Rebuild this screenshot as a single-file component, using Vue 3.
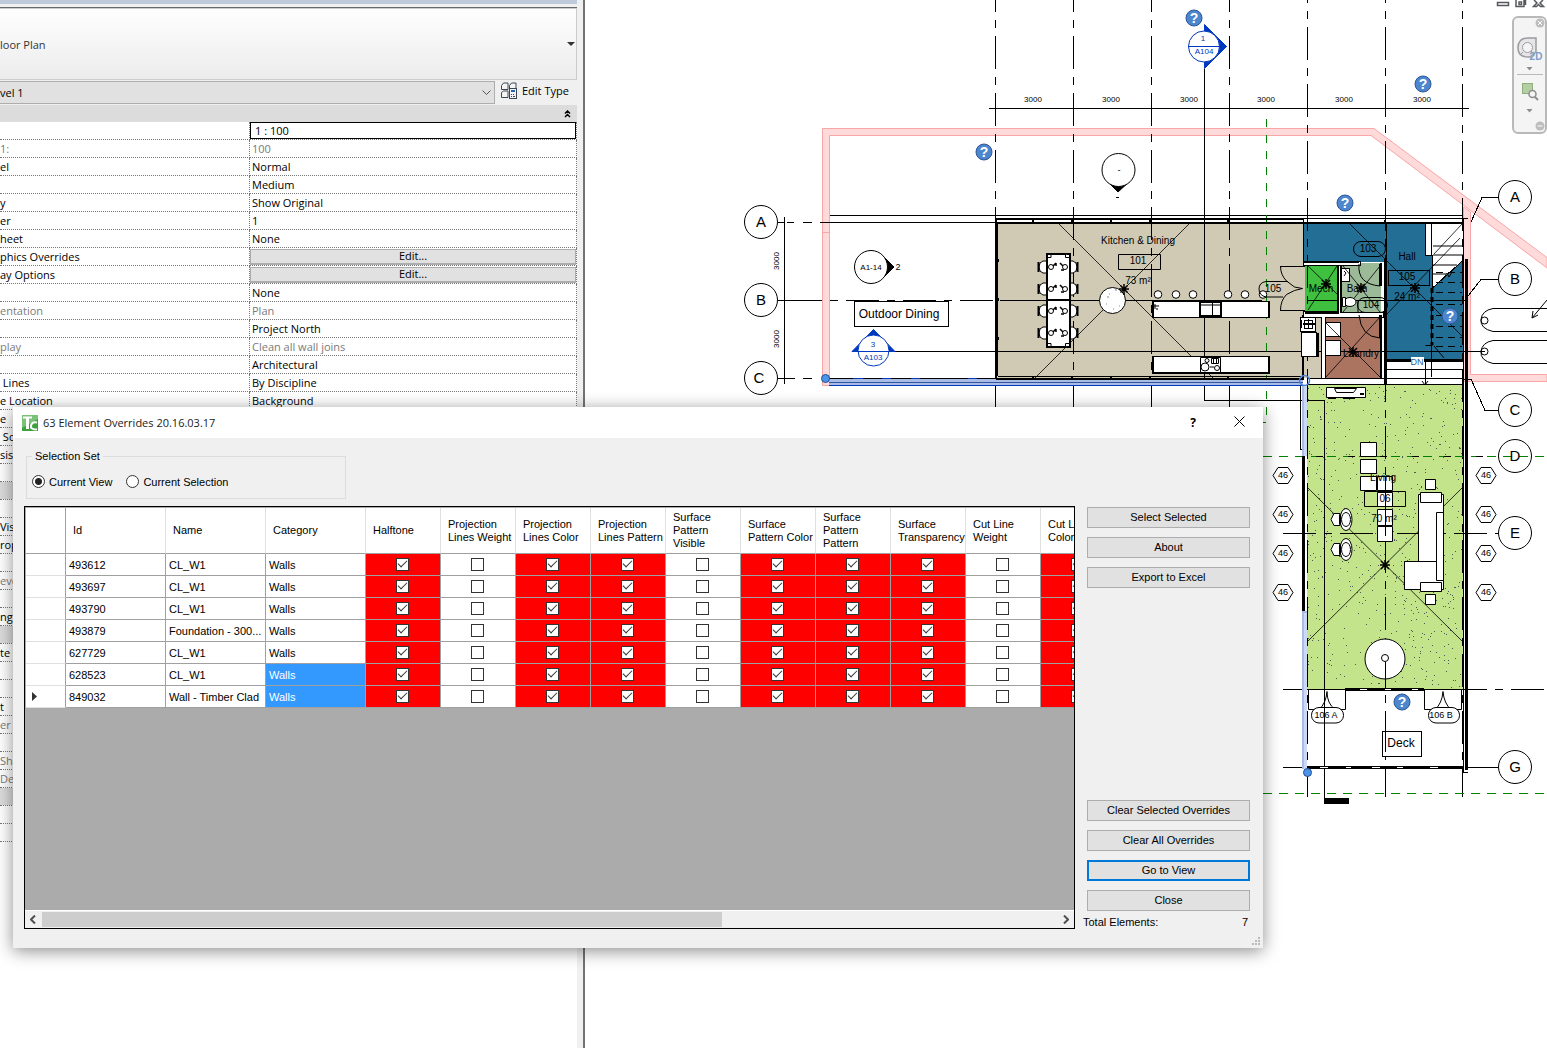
<script setup>
import { ref } from 'vue'

const properties = [
  { name: '', value: '1 : 100', kind: 'input' },
  { name: '1:', value: '100', muted: true },
  { name: 'el', value: 'Normal' },
  { name: '', value: 'Medium' },
  { name: 'y', value: 'Show Original' },
  { name: 'er', value: '1' },
  { name: 'heet', value: 'None' },
  { name: 'phics Overrides', value: 'Edit...', kind: 'button' },
  { name: 'ay Options', value: 'Edit...', kind: 'button' },
  { name: '', value: 'None' },
  { name: 'entation', value: 'Plan', muted: true },
  { name: '', value: 'Project North' },
  { name: 'play', value: 'Clean all wall joins', muted: true },
  { name: '', value: 'Architectural' },
  { name: ' Lines', value: 'By Discipline' },
  { name: 'e Location', value: 'Background' },
  { name: 'e' },
  { name: ' Sc' },
  { name: 'sis' },
  { name: '' },
  { name: '', kind: 'group' },
  { name: '' },
  { name: 'Vis' },
  { name: 'rop' },
  { name: '' },
  { name: 'eve', muted: true },
  { name: '' },
  { name: 'ng' },
  { name: '', kind: 'group' },
  { name: 'te' },
  { name: '' },
  { name: '' },
  { name: 't' },
  { name: 'er', muted: true },
  { name: '' },
  { name: 'She', muted: true },
  { name: 'Det', muted: true },
  { name: '', kind: 'group' },
  { name: '' },
  { name: '' },
]

const flags = [
  { label: 'Halftone', on: true },
  { label: 'Projection\nLines Weight', on: false },
  { label: 'Projection\nLines Color', on: true },
  { label: 'Projection\nLines Pattern', on: true },
  { label: 'Surface\nPattern\nVisible', on: false },
  { label: 'Surface\nPattern Color', on: true },
  { label: 'Surface\nPattern\nPattern', on: true },
  { label: 'Surface\nTransparency', on: true },
  { label: 'Cut Line\nWeight', on: false },
  { label: 'Cut Line\nColor', on: true },
]
const elements = [
  { id: '493612', name: 'CL_W1' },
  { id: '493697', name: 'CL_W1' },
  { id: '493790', name: 'CL_W1' },
  { id: '493879', name: 'Foundation - 300...' },
  { id: '627729', name: 'CL_W1' },
  { id: '628523', name: 'CL_W1', selected: true },
  { id: '849032', name: 'Wall - Timber Clad', selected: true, current: true },
]
const scope = ref('view')

// Plan drawing data
const bays = [1033, 1111, 1189, 1266, 1344, 1422]
const columnGrids = [
  { x: 995.5, from: -21, to: 420 },
  { x: 1073.5, from: -21, to: 420 },
  { x: 1151.5, from: -21, to: 420 },
  { x: 1229.5, from: -21, to: 420 },
  { x: 1307.5, from: -30, to: 797 },
  { x: 1385.5, from: -30, to: 797 },
  { x: 1462.5, from: -30, to: 797 },
]
const bubbles = [
  ['A', 761, 222], ['B', 761, 300], ['C', 759, 378, 761],
  ['A', 1515, 197], ['B', 1515, 279], ['C', 1515, 410],
  ['D', 1515, 456], ['E', 1515, 533], ['G', 1515, 767],
]
const helps = [[1194, 18], [984, 152], [1423, 84], [1345, 203], [1450, 316], [1402, 702]]
const tags = [475, 514, 553, 592].flatMap((y) => [[1283, y], [1486, y]])
const chairs = [267, 289, 311, 333]
const stools = [1158, 1176, 1193, 1228, 1245, 1263]
const treads = [272, 282, 292, 304, 315, 326, 337, 346]

let seed = 7
const rand = () => (seed = (seed * 16807) % 2147483647) / 2147483647
const speckles = Array.from({ length: 620 }, () => {
  const x = 1308 + Math.floor(rand() * 154)
  const y = 387 + Math.floor(rand() * 301)
  return `M${x} ${y}h1v1h-1z`
}).join('')
</script>

<template>
  <div class="app">
    <aside class="palette">
      <div class="caption"></div>
      <div class="palette-body">
        <button class="type-picker" type="button"><span>loor Plan</span><i class="caret"></i></button>
        <div class="instance">
          <select aria-label="View"><option>vel 1</option></select>
          <svg class="chevron" width="9" height="6" viewBox="0 0 9 6"><path d="M.5.5l4 4 4-4" /></svg>
          <button class="edit-type" type="button">
            <svg width="16" height="17" viewBox="0 0 16 17" fill="#f4f4f4" stroke="#3c4658">
              <path d="M.5 3.500l2-2.500h4.500v6.500H.500zM8.500 3.500l2-2.500h4.500v6.500H8.500zM.5 10.500l2-1.500h4.500v6.500H.500z" />
              <rect x="8.500" y="6.500" width="7" height="10" />
              <path d="M10 9h4" stroke="#2468b0" stroke-width="2" />
              <path d="M10 12.500h1m1 0h1m-3 2h1m1 0h2" />
            </svg>
            <span>Edit Type</span>
          </button>
        </div>
        <div class="section">
          <svg width="7" height="8" viewBox="0 0 7 8"><path d="M1 3.500L3.500 1 6 3.500M1 7l2.500-2.500L6 7" fill="none" stroke="#000" stroke-width="1.500" /></svg>
        </div>
        <table class="props">
          <tbody>
            <tr v-for="(p, i) in properties" :key="i" :class="{ muted: p.muted, group: p.kind === 'group' }">
              <td class="prop-name">{{ p.name }}</td>
              <td class="prop-value" :class="{ control: p.kind === 'input' || p.kind === 'button' }">
                <input v-if="p.kind === 'input'" type="text" :value="p.value" aria-label="View scale" />
                <button v-else-if="p.kind === 'button'" type="button">{{ p.value }}</button>
                <template v-else>{{ p.value }}</template>
              </td>
            </tr>
          </tbody>
        </table>
      </div>
    </aside>

    <main class="canvas">
      <svg class="plan" viewBox="585 0 962 1048" preserveAspectRatio="xMinYMin slice">
        <!-- site boundary -->
        <g fill="#ffdada" stroke="#f9a6a6">
          <path d="M822.500 385.500V128.500H1374L1547 257.500V268L1371 135.500H829.500V385.500z" />
          <path d="M822 232.500h8" />
          <path d="M1463.500 207L1470.500 212V374.500H1547V381.500H1463.500z" />
        </g>

        <!-- room fills -->
        <g class="crisp">
          <path fill="#d0cab5" d="M997 223H1303V266H1305V313H1321V378H997z" />
          <path fill="#236e94" d="M1303 223H1463V359H1385V262H1303z" />
          <rect x="1305" y="265" width="33" height="48" fill="#3fc03f" />
          <rect x="1341" y="263" width="40" height="51" fill="#9dba98" />
          <rect x="1325" y="317" width="57" height="61" fill="#aa7460" />
          <rect x="1307" y="385" width="156" height="304" fill="#c4e48c" />
          <path :d="speckles" fill="#4c5a5c" />
          <path fill="#fff" stroke="#000" d="M1425.500 222.500H1463.500V260L1432.500 288V255.500H1425.500z" />
          <path d="M1431.500 223V255" stroke="#000" />
          <rect x="1386" y="361" width="77" height="24" fill="#fff" />
        </g>

        <!-- grid lines -->
        <g stroke="#000" class="crisp">
          <line v-for="g in columnGrids" :key="g.x" :x1="g.x" :x2="g.x" :y1="g.from" :y2="g.to" stroke-dasharray="33 8 8 8" />
          <path d="M778 222.500H784M787 222.500h7M803 222.500h9M820 222.500H995M830 215.500H1463M778 300.500h12" fill="none" />
          <path d="M789 300.500H1000" stroke-dasharray="33 8 8 8" />
          <path d="M1000 300.500H1262M1307 300.500H1468M778 378.500h17M803 378.500h9" />
          <path d="M895 351.500H1485M989 108.500H1469M784.500 217V384" />
          <path d="M1204.500 69V400.500H1324.500V798" fill="none" />
          <path d="M1283 533.500H1498M1283 689.500H1547" stroke-dasharray="33 8 8 8" />
          <path d="M1283 767.500H1307M1468 767.500H1498" />
          <path d="M1471 222L1482 197.500H1498M1468 296L1481 279.500H1498M1463 379H1471L1485 410.500H1498" fill="none" />
          <rect x="1324" y="798" width="25" height="6" fill="#000" stroke="none" />
        </g>
        <g stroke="#008000" stroke-dasharray="8 8" class="crisp" fill="none">
          <path d="M1266.500 119V422.500H1260" />
          <path d="M1263 456.500H1547M1263 793.500H1547" stroke-dasharray="9 7" />
        </g>
        <path class="crisp" d="M1307 456.500H1498" stroke="#000" stroke-dasharray="7 25" stroke-dashoffset="-9" />

        <!-- kitchen walls -->
        <g fill="none" stroke="#000" class="crisp">
          <path d="M996 380V219H1303" stroke-width="2" />
          <path d="M997.500 376V222H1303M998 376.500H1303M1303 218.500H1468" />
          <path d="M998 223H1303M996 379H1303M1303 223H1463" stroke-width="2" />
          <path d="M1032 221h2M1071 221h2M1110 221h2M1149 221h2M1227 221h2M1384 221h2M1032 377h2M1071 377h2M1110 377h2M1149 377h2M1227 377h2M996 260h3M996 299h3M996 338h3" stroke-width="3" />
        </g>

        <!-- kitchen contents -->
        <g fill="none" stroke="#000">
          <path d="M1058 223L1213 378M1190 223L1035 378" stroke-width=".8" />
          <g fill="#fff">
            <g v-for="y in chairs" :key="y">
              <path :d="`M1047 ${y - 6}h-4q-4 1-4 6t4 6h4M1069 ${y - 6}h4q4 1 4 6t-4 6h-4`" />
              <path :d="`M1038.500 ${y - 5}v10M1077.500 ${y - 5}v10`" stroke-width="2" />
            </g>
            <rect x="1047" y="254" width="23" height="93" stroke-width="2" />
            <path d="M1046 300H1071" stroke-width="2" />
            <path d="M1048 257.500h3v-3M1065.500 254v3.500h4M1048 343.500h3v3M1065.500 347v-3.500h4" />
            <g v-for="y in chairs" :key="`p${y}`">
              <circle cx="1051" :cy="y" r="2.500" /><circle cx="1065" :cy="y" r="2.500" />
              <path :d="`M1053 ${y - 1}l3-3M1063 ${y - 1}l-3-3M1056 ${y - 4}v3M1061 ${y + 3}h3`" stroke-width="1.500" />
            </g>
            <circle cx="1112.500" cy="300.500" r="13" />
            <path d="M1107 297h2m6-7h2m-11 14h1m12 2h1m-7 3h1m-5-15h1" stroke="#888" />
            <circle v-for="x in stools" :key="x" :cx="x" cy="294.500" r="3.800" />
            <path d="M1152.500 301.500H1268.500V317.500H1152.500zM1152.500 356.500H1268.500V373H1152.500z" />
            <path d="M1153 301V318M1269 301V318M1153 356V373H1269V356" fill="none" stroke-width="2" />
            <path d="M1200 302H1221V316H1200z" stroke-width="2" />
            <path d="M1200 305h21M1212.500 303v13M1154 306h5M1155 304v5M1157 308v2" />
            <path d="M1200.500 357.500H1220.500V372.500H1200.500z" />
            <circle cx="1207" cy="360.500" r="2" /><circle cx="1205" cy="367" r="4" /><circle cx="1217" cy="368" r="2.500" />
            <path d="M1211.500 358.500h7v5h-7zM1213.500 358v5M1216.500 358v5M1210 367h4" />
          </g>
          <path d="M1118.500 254.500H1160.500V269.500H1118.500z" />
          <path d="M1119 289h10M1124 284v11M1120.500 285.500l7 7M1127.500 285.500l-7 7" stroke-width="1.500" />
          <path d="M1288 281.500H1266q-7 1-7 7.500t7 8H1283" />
          <path d="M1280 266.500H1305M1280 310.500H1305M1280.500 266q0 9 6 15l8 6 8 1.500-8 2-8 4q-6 6-6 16" />
        </g>

        <!-- service rooms -->
        <g fill="none" stroke="#000" class="crisp">
          <path d="M1303 219V266M1386 222V385M1463 218V385" />
          <path d="M1303 261.500H1360V265H1303z" fill="#fff" />
          <path d="M1303 311.500H1338V265.500H1341V312.500H1383V317H1325V378H1321V317H1303z" fill="#fff" />
          <path d="M1385.500 259V385" stroke-width="3" />
          <path d="M1303 262H1359M1305 313H1339M1338 265V313M1341 265V313M1381 263V280M1381 315V378M1303 315V380" stroke-width="2" />
          <path d="M1380.500 264V286M1380.500 315V338" stroke-width="3" />
          <path d="M1307 378.500H1385M1307 384.500H1463" />
          <path d="M1300.500 317.500h15v14h-15zM1301.500 332.500h15v24h-15zM1304 320h8v8h-8zM1308 319v10" fill="#fff" />
          <path d="M1301 320v8M1318 333v24M1303 324h13" stroke-width="2" />
          <path d="M1325.500 322.500h15v14h-15zM1325.500 340.500h15v15h-15zM1341.500 268.500h8v13h-8z" fill="#fff" />
          <path d="M1386 360.500H1463" stroke-width="3" />
          <path d="M1386 369.500H1463M1386 378.500H1463M1425.500 361V385M1431.500 290V377" />
        </g>
        <g fill="none" stroke="#000">
          <path d="M1308 266L1337 294M1308 310L1337 266M1343 266L1380 312M1343 312L1380 266M1326 323L1380 377M1326 377L1380 317" stroke-width=".8" />
          <path d="M1349 223L1462 336M1387 314L1460 238M1434 254L1462 224" stroke-width=".8" />
          <path d="M1433 255h30M1433 265h24M1433 274h13M1433 246h30" />
          <path d="M1432 288V345" stroke-width="3" stroke-dasharray="5 4" />
          <path v-for="y in treads" :key="y" :d="`M1436 ${y + .5}H1462`" stroke-dasharray="7 5" />
          <path d="M1444 278l3-5 2 4 3-5M1425.500 345.500h7M1434 346l10 12" />
          <path d="M1359 264q-2 20 21 22M1359 315q2 22 21 23M1358 300v12" />
          <ellipse cx="1350" cy="302" rx="6" ry="4.500" fill="#fff" />
          <path d="M1342.500 297.500h3v9h-3z" fill="#fff" />
          <path d="M1344 271l2 2-2 3" />
          <rect x="1353.500" y="241.500" width="32" height="15" rx="7.500" />
          <rect x="1357.500" y="297.500" width="30" height="15" rx="7.500" />
          <rect x="1388.500" y="270.500" width="41" height="15" />
          <path d="M1422 381l3 4 3-4" />
          <g stroke-width="1.500">
            <path v-for="[x, y] in [[1326, 284], [1361, 288], [1415, 288], [1353, 352], [1385, 565]]" :key="x"
              :d="`M${x - 5} ${y}h10M${x} ${y - 5}v10M${x - 4} ${y - 4}l8 8M${x + 4} ${y - 4}l-8 8`" />
          </g>
        </g>

        <!-- living room and deck -->
        <g fill="#fff" stroke="#000">
          <path d="M1308 488L1462 641M1462 488L1308 641" stroke-width=".8" />
          <path d="M1326.500 387.500h39v10h-39zM1334.500 388.500h22l-3 4h-17z" />
          <path d="M1328 398h8M1343 398h12M1360 394h4" stroke-width="2" />
          <path d="M1360.500 442.500h16v14h-16zM1360.500 459.500h16v14h-16zM1360.500 476.500h16v14h-16zM1377.500 476.500h15v14h-15zM1377.500 492.500h15v14h-15zM1377.500 509.500h15v16h-15zM1377.500 526.500h15v15h-15z" />
          <path d="M1364.500 491.500h41v15h-41z" fill="none" />
          <path d="M1425.500 479.500h10v10h-10zM1425.500 594.500h10v10h-10z" />
          <path d="M1418.500 494.500H1443.500V589.500H1404.500V561.500H1418.500z" />
          <path d="M1404.500 561.500h32M1420.500 492.500h21v10h-21zM1436.500 512.500h7v68h-7zM1420.500 582.500h21v9h-21z" />
          <g v-for="y in [519.5, 549.5]" :key="y">
            <path :d="`M1340 ${y - 6}h-6l-3 6 3 6h6z`" />
            <ellipse cx="1346" :cy="y" rx="6" ry="11" /><ellipse cx="1346" :cy="y" rx="4.500" ry="7" />
            <path :d="`M1340 ${y - 5}v10`" stroke-width="2" />
          </g>
          <circle cx="1385" cy="659" r="20" /><circle cx="1385" cy="658" r="3.500" />
          <path d="M1385.500 662V690M1385.500 476V536" />
          <path d="M1308.500 689.500H1345.500V709.500H1335q-8-6-8-18-1 12-8 18H1308.500zM1424.500 689.500H1461.500V709.500H1451q-7-6-8-18-1 12-8 18H1424.500z" />
          <rect x="1311.500" y="707.500" width="32" height="15.500" rx="7.500" /><rect x="1428.500" y="707.500" width="31" height="15.500" rx="7.500" />
          <path d="M1324.500 690V723" />
          <path d="M1345 689.500H1424M1307 767.500H1463" stroke-width="3" />
          <path d="M1360 689.500h7M1385 689.500h6M1412 689.500h6M1320 767.500h8M1346 767.500h5M1372 767.500h8M1397 767.500h6M1430 767.500h8" stroke="#fff" />
          <rect x="1382.500" y="731.500" width="39" height="25" />
          <path d="M1385.500 731V752" />
        </g>
        <g stroke="#000" fill="none" class="crisp">
          <path d="M1466.500 259V770" stroke-width="3" />
          <path d="M1463 385V772H1468" />
          <path d="M1303.500 456V611" stroke-width="3" />
          <path d="M1300.500 385V449H1303" />
        </g>

        <!-- selected walls -->
        <g class="crisp">
          <rect x="829" y="379" width="474" height="7" fill="#a9bce6" />
          <path d="M829 382.500H1303" stroke="#34569f" />
          <path d="M829 385.500H1303" stroke="#0038c0" />
          <path d="M829 378.500H996" stroke="#000" />
          <path d="M996 379H1303" stroke="#000" stroke-width="2" />
          <path d="M853 378.500h10M882 378.500h9M911 378.500h9M968 378.500h9" stroke="#0038c0" />
          <rect x="1302" y="386" width="5" height="70" fill="#a9bce6" /><rect x="1304" y="386" width="3" height="70" fill="#cdd8f4" />
          <rect x="1302" y="611" width="5" height="158" fill="#a9bce6" /><rect x="1304" y="613" width="3" height="156" fill="#cdd8f4" />
        </g>
        <g fill="#4b94ea" stroke="#1e4f96">
          <circle cx="825.500" cy="378.500" r="4" /><circle cx="1307.500" cy="772.500" r="4" />
          <circle cx="1304.500" cy="380.500" r="5" fill="none" stroke="#4b84da" stroke-width="1.500" />
        </g>

        <!-- site objects -->
        <g fill="none" stroke="#000">
          <path d="M1547 308.500H1493q-11 2-12 11t12 12H1547M1547 340.500H1493q-11 2-12 11t12 12H1547M1547 300L1532 318l1-7M1532 318l6-3" />
          <circle cx="1484.500" cy="320.500" r="3.500" /><circle cx="1484.500" cy="351.500" r="3.500" />
        </g>

        <!-- section and elevation marks -->
        <g fill="#0038c0" stroke="#0038c0">
          <path d="M1204.500 24.500L1226.500 46.500 1204.500 68.500z" /><circle cx="1204" cy="46.500" r="15.500" fill="#fff" /><path d="M1188 46.500H1227" />
          <path d="M873.500 329.500L895 351.500H852z" /><circle cx="873.500" cy="350.500" r="15.500" fill="#fff" /><path d="M852 351.500H895" />
        </g>
        <g stroke="#000" fill="#000">
          <path d="M882 255L894 267 882 279z" /><circle cx="871" cy="267" r="16.500" fill="#fff" />
          <path d="M1107 181L1118 192 1130 181z" /><circle cx="1118.500" cy="170" r="16.500" fill="#fff" />
          <path d="M1116 197.500h3" />
          <rect x="854.500" y="301.500" width="94" height="25" fill="#fff" />
        </g>

        <!-- grid bubbles and window tags -->
        <g v-for="([letter, x, y, cx], i) in bubbles" :key="i">
          <circle :cx="cx || x" :cy="y" r="16.500" :fill="letter === 'D' ? 'none' : '#fff'" stroke="#000" />
          <text :x="x" :y="y + 5" class="bubble">{{ letter }}</text>
        </g>
        <g v-for="([x, y], i) in tags" :key="`t${i}`">
          <path :d="`M${x - 10} ${y + .5}l5-8h10l5 8-5 8h-10z`" fill="#fff" stroke="#000" />
          <text :x="x" :y="y + 3" class="t9">46</text>
        </g>

        <!-- notes -->
        <text v-for="x in bays" :key="x" :x="x" y="102" class="t8">3000</text>
        <text transform="translate(779 261) rotate(-90)" class="t8">3000</text>
        <text transform="translate(779 339) rotate(-90)" class="t8">3000</text>
        <text x="1203" y="41" class="t8 blue">1</text>
        <text x="1204" y="54" class="t8 blue">A104</text>
        <text x="873" y="347" class="t8 blue">3</text>
        <text x="873" y="360" class="t8 blue">A103</text>
        <text x="871" y="270" class="t8">A1-14</text>
        <text x="898" y="270" class="t9">2</text>
        <text x="1119" y="173" class="t9">-</text>
        <text x="1138" y="244" class="t10">Kitchen &amp; Dining</text>
        <text x="1138" y="264" class="t10">101</text>
        <text x="1138" y="284" class="t10">73 m²</text>
        <text x="1273" y="292" class="t10">105</text>
        <text x="1368" y="252" class="t10">103</text>
        <text x="1407" y="260" class="t10">Hall</text>
        <text x="1407" y="280" class="t10">105</text>
        <text x="1407" y="300" class="t10">24 m²</text>
        <text x="1321" y="292" class="t10">Mech</text>
        <text x="1357" y="292" class="t10">Bath</text>
        <text x="1371" y="308" class="t10">104</text>
        <text x="1361" y="357" class="t10">Laundry</text>
        <rect x="1411" y="357" width="13" height="9" fill="#fff" />
        <text x="1417" y="365" class="t9 dn">DN</text>
        <text x="1383" y="481" class="t10">Living</text>
        <text x="1385" y="502" class="t10">06</text>
        <text x="1384" y="522" class="t10">70 m²</text>
        <text x="1326" y="718" class="t9">106 A</text>
        <text x="1441" y="718" class="t9">106 B</text>
        <text x="899" y="318" class="t12">Outdoor Dining</text>
        <text x="1401" y="747" class="t12">Deck</text>

        <g v-for="[x, y] in helps" :key="`h${x}`">
          <circle :cx="x" :cy="y" r="8" fill="#4c86ce" stroke="#2f5596" />
          <text :x="x" :y="y + 5" class="help">?</text>
        </g>

        <!-- window controls and navigation bar -->
        <g fill="#fff" stroke="#56585c" stroke-width="1.500">
          <path d="M1497.500 2.500h11v3h-11zM1516 0v6.500h8V0M1525.500 0v5M1519 2h2.500v2.500H1519z" />
          <path d="M1534 0l3 3-3.500 3.500h3l2-2 2 2h3L1540 3l3-3" />
        </g>
        <g stroke="#b9b9b9" fill="#f4f4f4">
          <rect x="1513" y="17" width="33" height="116" rx="5" stroke-width="2" />
          <g stroke="none" fill="#bdbdbd"><circle cx="1540" cy="23" r="4.500" /><circle cx="1540" cy="126" r="4.500" /></g>
          <path d="M1538 21l4 4m0-4l-4 4M1537.500 126h5" stroke="#fff" />
          <path d="M1518 48q0-10 10-10h8v14l-6 5h-2q-10 0-10-9z" fill="#e6e6e8" stroke="#9b9ba0" stroke-width="1.500" />
          <circle cx="1527.500" cy="47.500" r="5" stroke="#9b9ba0" /><path d="M1523 52l-3 3M1531 51l3 3" stroke="#9b9ba0" />
          <path d="M1517 74.500h26" />
          <path d="M1526.500 67h6l-3 3.500zM1526.500 109h6l-3 3.500z" fill="#8d8d8d" stroke="none" />
          <rect x="1522.500" y="83.500" width="10" height="10" fill="#b5cfa4" stroke="#8fae7c" />
          <circle cx="1532.500" cy="94" r="3.500" stroke="#8d8d8d" stroke-width="1.500" /><path d="M1535 97l3 3" stroke="#8d8d8d" stroke-width="2" />
        </g>
        <text x="1536" y="60" class="nav2d">2D</text>
      </svg>
    </main>

    <section class="dialog" role="dialog" aria-label="63 Element Overrides 20.16.03.17">
      <header class="titlebar">
        <svg width="16" height="16" viewBox="0 0 16 16">
          <rect width="16" height="16" fill="#3fa03e" /><path d="M0 0h16v4L0 13z" fill="#79c277" />
          <path d="M1 1.500h9v2H7V14H4V3.500H1z" fill="#fff" />
          <path d="M15 7.500q-5-1-6 3t6 4" fill="none" stroke="#fff" stroke-width="2" />
        </svg>
        <h1>63 Element Overrides 20.16.03.17</h1>
        <button type="button" class="tb" aria-label="Help">?</button>
        <button type="button" class="tb" aria-label="Close window">
          <svg width="11" height="11" viewBox="0 0 11 11"><path d="M.5.5l10 10M10.500.500l-10 10" stroke="#000" /></svg>
        </button>
      </header>
      <div class="content">
        <fieldset>
          <legend>Selection Set</legend>
          <label><input v-model="scope" type="radio" name="scope" value="view" />Current View</label>
          <label><input v-model="scope" type="radio" name="scope" value="selection" />Current Selection</label>
        </fieldset>
        <div class="work">
          <div class="grid">
            <div class="rows">
              <table>
                <colgroup><col class="c-mark" /><col v-for="n in 3" :key="n" class="c-text" /><col v-for="f in flags" :key="f.label" class="c-flag" /></colgroup>
                <thead>
                  <tr><th></th><th>Id</th><th>Name</th><th>Category</th><th v-for="f in flags" :key="f.label">{{ f.label }}</th></tr>
                </thead>
                <tbody>
                  <tr v-for="e in elements" :key="e.id">
                    <td class="mark"><svg v-if="e.current" width="5" height="9" viewBox="0 0 5 9"><path d="M0 0l5 4.500L0 9z" fill="#333" /></svg></td>
                    <td>{{ e.id }}</td>
                    <td>{{ e.name }}</td>
                    <td :class="{ selected: e.selected }">Walls</td>
                    <td v-for="f in flags" :key="f.label" class="flag" :class="{ on: f.on }">
                      <input type="checkbox" :checked="f.on" :aria-label="`${f.label} ${e.id}`" />
                    </td>
                  </tr>
                </tbody>
              </table>
            </div>
            <div class="scrollbar">
              <svg width="6" height="9" viewBox="0 0 6 9"><path d="M5 .5l-4 4 4 4" /></svg>
              <div class="track"><div class="thumb"></div></div>
              <svg width="6" height="9" viewBox="0 0 6 9"><path d="M1 .5l4 4-4 4" /></svg>
            </div>
          </div>
          <div class="actions">
            <div class="stack">
              <button type="button">Select Selected</button>
              <button type="button">About</button>
              <button type="button">Export to Excel</button>
            </div>
            <div class="stack">
              <button type="button">Clear Selected Overrides</button>
              <button type="button">Clear All Overrides</button>
              <button type="button" class="primary">Go to View</button>
              <button type="button">Close</button>
            </div>
            <div class="total"><span>Total Elements:</span><span>7</span></div>
          </div>
        </div>
      </div>
      <svg class="grip" width="8" height="8" viewBox="0 0 8 8"><path d="M6 0h2v2H6zM3 3h2v2H3zM6 3h2v2H6zM0 6h2v2H0zM3 6h2v2H3zM6 6h2v2H6z" fill="#bbb" /></svg>
    </section>
  </div>
</template>

<style>
body { margin: 0; background: #fff; }
</style>

<style scoped>
.app { position: relative; display: flex; min-height: 100vh; overflow: hidden; color: #000; font-family: 'Liberation Sans', Arial, sans-serif; font-size: 11px; }
button, input, select { font: inherit; color: inherit; margin: 0; padding: 0; border-radius: 0; }

.palette { flex: 0 0 577px; padding-right: 6px; background: #f0f0f0; border-right: 2px solid #737373; font-family: 'Open Sans', 'Noto Sans', sans-serif; display: flex; flex-direction: column; }
.caption { height: 4px; background: #bfcbdb; margin-bottom: 3px; }
.palette-body { flex: 1; background: #fff; display: flex; flex-direction: column; border-top: 1px solid #696969; }
.type-picker { display: flex; align-items: center; justify-content: space-between; height: 72px; border: 1px solid #ccc; border-left: 0; background: linear-gradient(#fefefe, #ececec); color: #333; padding-right: 1px; }
.caret { border: 4px solid transparent; border-top-color: #333; border-bottom: 0; }
.instance { position: relative; display: flex; height: 25px; background: #f0f0f0; padding-top: 1px; box-sizing: border-box; }
.instance select { appearance: none; width: 495px; height: 23px; border: 1px solid #adadad; border-left: 0; background: #e1e1e1; }
.chevron { position: absolute; left: 482px; top: 10px; fill: none; stroke: #555; }
.edit-type { display: flex; align-items: center; gap: 5px; margin-left: 6px; height: 18px; border: 0; background: none; }
.section { display: flex; justify-content: flex-end; align-items: center; height: 17px; padding-right: 6px; background: #dcdcdc; }
.props { width: 100%; border-collapse: collapse; table-layout: fixed; }
.props td { height: 17px; padding: 0; border-bottom: 1px dotted #777; line-height: 17px; white-space: pre; overflow: hidden; }
.props .prop-name { width: 249px; border-right: 1px dotted #777; }
.props .prop-value { padding-left: 2px; border-right: 1px dotted #777; }
.props .control { padding-left: 0; }
.muted td { color: #7a7a7a; }
.props .group td { background: #dcdcdc; border-right-color: #dcdcdc; }
.control input { display: block; box-sizing: border-box; width: 100%; height: 17px; border: 1px solid #000; padding-left: 4px; outline: 0; background: #fff; }
.control button { display: block; width: 100%; height: 16px; line-height: 12px; background: #e1e1e1; border: 1px solid #adadad; border-width: 1px 1px 2px; }

.canvas { flex: 1; min-width: 0; position: relative; background: #fff; }
.plan { position: absolute; inset: 0; width: 100%; height: 100%; }
.crisp { shape-rendering: crispEdges; }
.plan text { text-anchor: middle; font-family: 'Liberation Sans', Arial, sans-serif; }
.plan .bubble { font-size: 15px; }
.plan .t8 { font-size: 8px; }
.plan .t9 { font-size: 9px; }
.plan .t10 { font-size: 10px; }
.plan .t12 { font-size: 12px; }
.plan .blue { fill: #0038c0; }
.plan .dn { fill: #1d5f9c; }
.plan .help { font-size: 14px; font-weight: bold; fill: #fff; }
.plan .nav2d { font-size: 10px; font-weight: bold; fill: #7a9ec8; }

.dialog { position: absolute; left: 13px; top: 407px; width: 1250px; background: #f0f0f0; box-shadow: 0 3px 16px rgba(0, 0, 0, .45); }
.titlebar { display: flex; align-items: center; height: 31px; padding-left: 9px; background: #fff; }
.titlebar h1 { flex: 1; margin: 0 0 0 5px; font: 11px 'Open Sans', 'Noto Sans', sans-serif; color: #222; }
.tb { width: 46px; height: 31px; border: 0; background: none; font: bold 12px 'Open Sans', sans-serif; }
.tb:last-child { margin-right: 1px; }
.content { padding: 12px 13px 19px 11px; }
fieldset { display: flex; align-items: center; gap: 14px; box-sizing: border-box; width: 320px; height: 49px; margin: 0 0 7px 2px; padding: 2px 5px 0; border: 1px solid #dcdcdc; min-width: 0; }
legend { padding: 0 3px; line-height: 13px; }
label { display: flex; align-items: center; gap: 4px; }
input[type='radio'] { appearance: none; width: 13px; height: 13px; border: 1px solid #333; border-radius: 50%; background: #fff; }
input[type='radio']:checked { background: radial-gradient(circle, #222 3px, #fff 4px); }
.work { display: flex; gap: 8px; }
.grid { flex: 1; min-width: 0; height: 421px; display: flex; flex-direction: column; border: 1px solid #000; background: #ababab; }
.rows { flex: 1; overflow: hidden; padding: 1px 0 0 1px; }
.rows table { width: 1090px; table-layout: fixed; border-collapse: separate; border-spacing: 0; background: #fff; }
.c-mark { width: 40px; }
.c-text { width: 100px; }
.c-flag { width: 75px; }
th { box-sizing: border-box; height: 46px; padding: 0 0 0 7px; border-right: 1px solid #e0e0e0; border-bottom: 1px solid #a0a0a0; font-weight: normal; text-align: left; line-height: 13px; white-space: pre; }
th:first-child { border-right-color: #a0a0a0; }
.rows td { box-sizing: border-box; height: 22px; padding: 0 0 0 3px; border-right: 1px solid #a0a0a0; border-bottom: 1px solid #a0a0a0; white-space: nowrap; overflow: hidden; }
.rows .mark { padding-left: 6px; border-bottom-color: #e0e0e0; }
.mark svg { display: block; }
.rows .selected { background: #3399ff; color: #fff; }
.rows .flag { padding: 0 2px 0 0; }
.flag.on { background: #f00; }
.flag input { appearance: none; display: block; box-sizing: border-box; position: relative; width: 13px; height: 13px; margin: 0 auto; border: 1px solid #333; background: #fff; }
.flag input:checked::after { content: ''; position: absolute; left: 1px; top: 1px; width: 8px; height: 4px; box-sizing: content-box; border: solid #333; border-width: 0 0 1px 1px; transform: rotate(-45deg); }
.scrollbar { display: flex; align-items: center; height: 18px; padding: 0 5px 1px; background: #f0f0f0; border-top: 1px solid #fff; box-sizing: border-box; }
.scrollbar svg { fill: none; stroke: #505050; stroke-width: 2; }
.track { flex: 1; margin: 0 6px; }
.thumb { width: 67%; height: 15px; background: #cdcdcd; }
.actions { width: 167px; display: flex; flex-direction: column; padding-top: 1px; }
.stack { display: flex; flex-direction: column; gap: 9px; margin-left: 4px; }
.stack + .stack { margin-top: auto; }
.stack button { height: 21px; border: 1px solid #adadad; background: #e1e1e1; line-height: 17px; }
.stack .primary { border: 2px solid #0078d7; line-height: 15px; }
.total { display: flex; justify-content: space-between; margin-top: 5px; padding-right: 2px; line-height: 13px; }
.grip { position: absolute; right: 3px; bottom: 3px; }
</style>
